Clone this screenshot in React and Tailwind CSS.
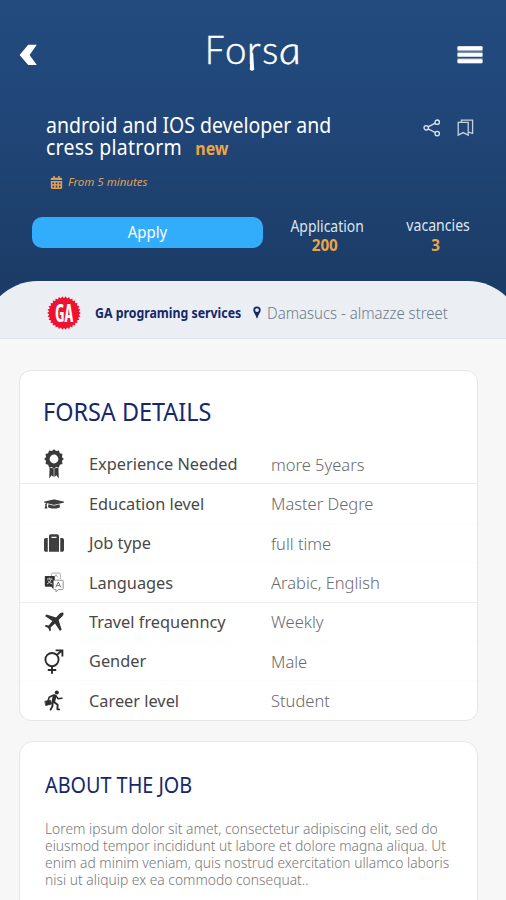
import { FaCalendarAlt, FaGraduationCap, FaSuitcase } from "react-icons/fa";

function Narrow({ className = "", children }) {
  return <span className={`inline-block whitespace-nowrap ${className}`}>{children}</span>;
}

// Outline with small teeth, used for the seal and the award
function teeth(cx, cy, outer, inner, count) {
  const points = [];
  for (let i = 0; i < count * 2; i++) {
    const r = i % 2 === 0 ? outer : inner;
    const a = (Math.PI * i) / count;
    points.push(`${(cx + r * Math.cos(a)).toFixed(2)},${(cy + r * Math.sin(a)).toFixed(2)}`);
  }
  return points.join(" ");
}

function BackIcon() {
  return (
    <svg width="18" height="22" viewBox="0 0 18 22">
      <path d="M9.2 0.8H17.8L10.6 11L17.8 21H9.2L0.6 11Z" fill="#fff" />
    </svg>
  );
}

function MenuIcon() {
  return (
    <svg width="26" height="18" viewBox="0 0 26 18">
      <rect x="0.5" y="0.3" width="25" height="17" rx="1" fill="#8296b8" />
      <rect x="0.5" y="0.3" width="25" height="4" rx="1" fill="#fff" />
      <rect x="0.5" y="5.6" width="25" height="1" fill="#234b7d" />
      <rect x="0.5" y="6.8" width="25" height="4" rx="1" fill="#fff" />
      <rect x="0.5" y="10.9" width="25" height="1.2" fill="#234b7d" />
      <rect x="0.5" y="13.3" width="25" height="4" rx="1" fill="#fff" />
    </svg>
  );
}

function ShareIcon() {
  return (
    <svg width="18" height="18" viewBox="0 0 18 18" fill="none" stroke="#dce5f0" strokeWidth="1.3">
      <circle cx="3.2" cy="8.8" r="2.2" />
      <circle cx="14.2" cy="3.2" r="2.2" />
      <circle cx="14.2" cy="14.6" r="2.2" />
      <path d="M5.2 7.8L12.2 4.2M5.2 9.9L12.2 13.5" />
    </svg>
  );
}

function BookmarksIcon() {
  return (
    <svg width="17" height="18" viewBox="0 0 17 18" fill="none" stroke="#c3d0e0" strokeWidth="1.3">
      <path d="M1.2 3.4H11.2V16.2L6.2 13.6L1.2 16.2Z" />
      <path d="M4.4 3.2V1.2H15.6V14.4L11.4 13.2" />
    </svg>
  );
}

function PinIcon() {
  return (
    <svg width="8" height="13" viewBox="0 0 8 13">
      <path
        d="M4 0.4a3.7 3.7 0 0 1 3.7 3.7C7.7 6.6 5.4 8.2 4.4 12.2H3.6C2.6 8.2 0.3 6.6 0.3 4.1A3.7 3.7 0 0 1 4 0.4ZM4 2.2a1.9 1.9 0 1 0 0 3.8a1.9 1.9 0 0 0 0-3.8Z"
        fill="#14286a"
        fillRule="evenodd"
      />
    </svg>
  );
}

function Seal() {
  return (
    <svg width="34" height="34" viewBox="0 0 34 34">
      <polygon points={teeth(17, 17, 16.8, 14.8, 30)} fill="#ee1230" />
      <text
        transform="translate(17 26) scale(0.66 1)"
        textAnchor="middle"
        fill="#fff"
        className="font-['Open_Sans',sans-serif] text-[25px] font-bold [font-stretch:75%]"
      >
        GA
      </text>
    </svg>
  );
}

function AwardIcon() {
  return (
    <svg width="20" height="30" viewBox="0 0 20 30" fill="#3a3a3a">
      <polygon points={teeth(10, 10, 9.8, 8.2, 12)} />
      <circle cx="10" cy="10" r="4.4" fill="#fff" />
      <path d="M5.6 18.6L9.7 19.6V28L7.6 26.2L5.2 29.4Z" />
      <path d="M14.4 18.6L10.3 19.6V28L12.4 26.2L14.8 29.4Z" />
    </svg>
  );
}

function LanguageIcon() {
  return (
    <svg width="20" height="21" viewBox="0 0 20 21" fill="none">
      <path d="M7.5 4V2.2Q7.5 1 8.7 1H15Q16.4 1 16.4 2.4V7" stroke="#999" strokeWidth="0.8" />
      <path d="M10.4 5.6L12 2.6L13.8 5.6" stroke="#999" strokeWidth="0.8" />
      <path d="M1.4 4H9.8Q10.8 4 10.8 5V14.2L8.6 16.4L7.4 14.8H1.8Q0.8 14.8 0.8 13.8V4.8Q0.8 4 1.4 4Z" fill="#333" />
      <path d="M3 7H8.4M5.6 5.6V7M7.4 7Q6.4 10.6 3 12M4 8.6Q5.6 11.4 8.4 12" stroke="#ddd" strokeWidth="0.9" />
      <path
        d="M10.4 8.2H18.2Q19.2 8.2 19.2 9.2V16.6Q19.2 17.6 18.2 17.6H14.2L12 19.8V17.6H10.4Q9.4 17.6 9.4 16.6V9.2Q9.4 8.2 10.4 8.2Z"
        fill="#fff"
        stroke="#777"
        strokeWidth="0.8"
      />
      <path d="M11.8 15.4L14.3 10L16.8 15.4M12.8 13.6H15.8" stroke="#666" strokeWidth="0.9" />
    </svg>
  );
}

function PlaneIcon() {
  return (
    <svg width="20" height="20" viewBox="0 0 20 20" fill="#333">
      <path d="M19.2 0.8Q20.2 2.2 18.4 4.2L14.6 8L17.6 17.4L16 19L11 11.6L6.6 15.4L7 18.2L5.8 19.4L4.2 16L0.6 14.2L1.8 13L4.6 13.4L8.4 9L1 4L2.6 2.4L12 5.4L15.8 1.6Q17.8 -0.2 19.2 0.8Z" />
    </svg>
  );
}

function GenderIcon() {
  return (
    <svg width="20" height="25" viewBox="0 0 20 25" fill="none" stroke="#2c2c2c" strokeWidth="1.9">
      <circle cx="8" cy="10.6" r="6.6" />
      <path d="M12.4 6.2L18 1.6M11.6 1.4H18.4V7.6M8 17.2V24.8M3.8 21H12.2" />
    </svg>
  );
}

function CareerIcon() {
  return (
    <svg width="20" height="21" viewBox="0 0 20 21" fill="none" stroke="#2c2c2c" strokeLinecap="round" strokeLinejoin="round">
      <circle cx="12.8" cy="2.4" r="2" fill="#2c2c2c" stroke="none" />
      <path d="M10.6 6L9.4 11.4" strokeWidth="3.6" />
      <path d="M9.2 5.2L5.2 7.2L4.2 10.2M11.8 5.8L14.2 8.8L18 8.2" strokeWidth="1.6" />
      <path d="M10 12L13.6 14.8L13.4 19.4H15.2M8.6 12.6L8.4 16.4L6.6 19.6" strokeWidth="1.9" />
      <path d="M1.2 11.2L6.4 10.2L7.6 14L2 15.4Z" fill="#2c2c2c" strokeWidth="0.8" />
    </svg>
  );
}

const details = [
  { icon: <AwardIcon />, label: "Experience Needed", value: "more 5years", line: "border-[#ececec]" },
  { icon: <FaGraduationCap className="h-[18px] w-[20px] scale-y-75" />, label: "Education level", value: "Master Degre", line: "border-[#fcfcfc]" },
  { icon: <FaSuitcase className="size-[20px]" />, label: "Job type", value: "full time", line: "border-[#fcfcfc]" },
  { icon: <LanguageIcon />, label: "Languages", value: "Arabic, English", line: "border-[#ececec]" },
  { icon: <PlaneIcon />, label: "Travel frequenncy", value: "Weekly", line: "border-[#fcfcfc]" },
  { icon: <GenderIcon />, label: "Gender", value: "Male", line: "border-[#fcfcfc]" },
  { icon: <CareerIcon />, label: "Career level", value: "Student", line: "border-transparent" },
];

// The italic "a" is the round one, so it is skewed back upright
function Logo() {
  return (
    <div className="relative flex h-[44px] w-[96px] text-[38.5px] leading-[44px] font-light text-white font-['Lato',sans-serif] [-webkit-text-stroke:0.5px_white]">
      <span className="w-[20px] origin-left scale-x-90">F</span>
      <span className="w-[22px]">o</span>
      <span className="w-[15px]">r</span>
      <span className="w-[16px]">s</span>
      <span className="w-[22px] origin-left scale-x-115 skew-x-[8deg] italic">a</span>
      <svg className="absolute top-[26px] left-[44px]" width="6" height="19" viewBox="0 0 6 19">
        <path d="M1.9 0H4.1L5.2 16.6Q3 19 0.8 16.6Z" fill="#fff" />
      </svg>
    </div>
  );
}

function Header() {
  return (
    <header className="h-[281px] bg-linear-to-b from-[#234b7d] via-[#21477a] via-35% to-[#1b3c66] text-white">
      <div className="flex h-[100px] items-center justify-between pt-[9px] pr-[23px] pl-[19px]">
        <BackIcon />
        <div className="pb-[11px] pl-[12px]">
          <Logo />
        </div>
        <MenuIcon />
      </div>

      <div className="flex h-[66px] justify-between pt-[13px] pr-[32px] pl-[46px]">
        <h1 className="w-[340px] origin-left scale-x-[0.885] text-[22px] leading-[22px] whitespace-nowrap">
          android and IOS developer and
          <br />
          <span className="tracking-[0.3px]">cress platrorm</span>
          <span className="ml-[15px] text-[18px] leading-[18px] font-bold text-[#eda445]">new</span>
        </h1>
        <div className="flex gap-[16px] pt-[6px]">
          <ShareIcon />
          <BookmarksIcon />
        </div>
      </div>

      <div className="flex h-[32px] items-center gap-[5px] pl-[50px] text-[#dda057]">
        <FaCalendarAlt className="size-[13px]" />
        <Narrow className="text-[11.5px] italic">From 5 minutes</Narrow>
      </div>

      <div className="flex pt-[19px] pl-[32px]">
        <button className="h-[31px] w-[231px] rounded-[10px] bg-[#32adfb] pb-[2px] text-[17px] leading-[27px]">
          <Narrow className="scale-x-[0.88]">Apply</Narrow>
        </button>
        <div className="ml-[13px] flex w-[102px] flex-col items-center text-[16px] leading-[19px]">
          <Narrow className="scale-x-[0.87] text-[#dde5ef]">Application</Narrow>
          <Narrow className="mr-[4px] scale-x-[0.95] font-bold text-[#eda445]">200</Narrow>
        </div>
        <div className="-mt-px ml-[7px] flex w-[102px] flex-col items-center text-[16px] leading-[19.5px]">
          <Narrow className="ml-[4px] scale-x-[0.88] text-[#dde5ef]">vacancies</Narrow>
          <Narrow className="scale-x-[0.95] font-bold text-[#eda445]">3</Narrow>
        </div>
      </div>
    </header>
  );
}

function CompanyBar() {
  return (
    <div className="overflow-hidden bg-[#1b3c66]">
      <div className="-mx-[17px] flex h-[58px] items-center rounded-t-[55px] border-b border-[#e2e4e7] bg-[#ebeef2] pt-[6px] pl-[64px]">
        <Seal />
        <Narrow className="ml-[14px] w-[146px] origin-left scale-x-[0.88] text-[14px] font-bold text-[#14286a]">
          GA programing services
        </Narrow>
        <div className="ml-[12px]">
          <PinIcon />
        </div>
        <Narrow className="ml-[6px] origin-left scale-x-[0.935] text-[16px] font-light text-[#6f7c8d]">
          Damasucs - almazze street
        </Narrow>
      </div>
    </div>
  );
}

export default function App() {
  return (
    <div className="h-[900px] w-[506px] overflow-hidden bg-[#f7f7f7] font-['Noto_Sans',sans-serif]">
      <Header />
      <CompanyBar />

      <main className="pr-[28px] pl-[19px]">
        <section className="mt-[31px] h-[351px] rounded-[12px] border border-[#e6e6e6] bg-white pt-[24px]">
          <h2 className="pl-[23px] text-[25.5px] leading-[32px] text-[#14286a]">
            <Narrow className="origin-left scale-x-[0.918]">FORSA DETAILS</Narrow>
          </h2>
          <ul className="mt-[18px]">
            {details.map((row) => (
              <li key={row.label} className={`flex h-[39.4px] items-center border-b ${row.line}`}>
                <div className="ml-[24px] flex w-[20px] justify-center text-[#3f3f3f]">{row.icon}</div>
                <div className="ml-[25px] w-[182px] text-[17px] text-[#484848]">
                  <Narrow className="origin-left scale-x-[0.96]">{row.label}</Narrow>
                </div>
                <div className="pt-[2px] text-[16.5px] font-light text-[#6a6a6a]">
                  <Narrow>{row.value}</Narrow>
                </div>
              </li>
            ))}
          </ul>
        </section>

        <section className="mt-[20px] h-[180px] rounded-t-[14px] border border-[#e6e6e6] bg-white pt-[28px] pl-[25px]">
          <h2 className="text-[22.5px] leading-[30px] text-[#14286a]">
            <Narrow className="origin-left scale-x-[0.88]">ABOUT THE JOB</Narrow>
          </h2>
          <p className="mt-[20px] origin-left scale-x-[0.922] text-[15px] leading-[17px] font-light whitespace-nowrap text-[#777]">
            Lorem ipsum dolor sit amet, consectetur adipiscing elit, sed do
            <br />
            eiusmod tempor incididunt ut labore et dolore magna aliqua. Ut
            <br />
            enim ad minim veniam, quis nostrud exercitation ullamco laboris
            <br />
            nisi ut aliquip ex ea commodo consequat..
          </p>
        </section>
      </main>
    </div>
  );
}
